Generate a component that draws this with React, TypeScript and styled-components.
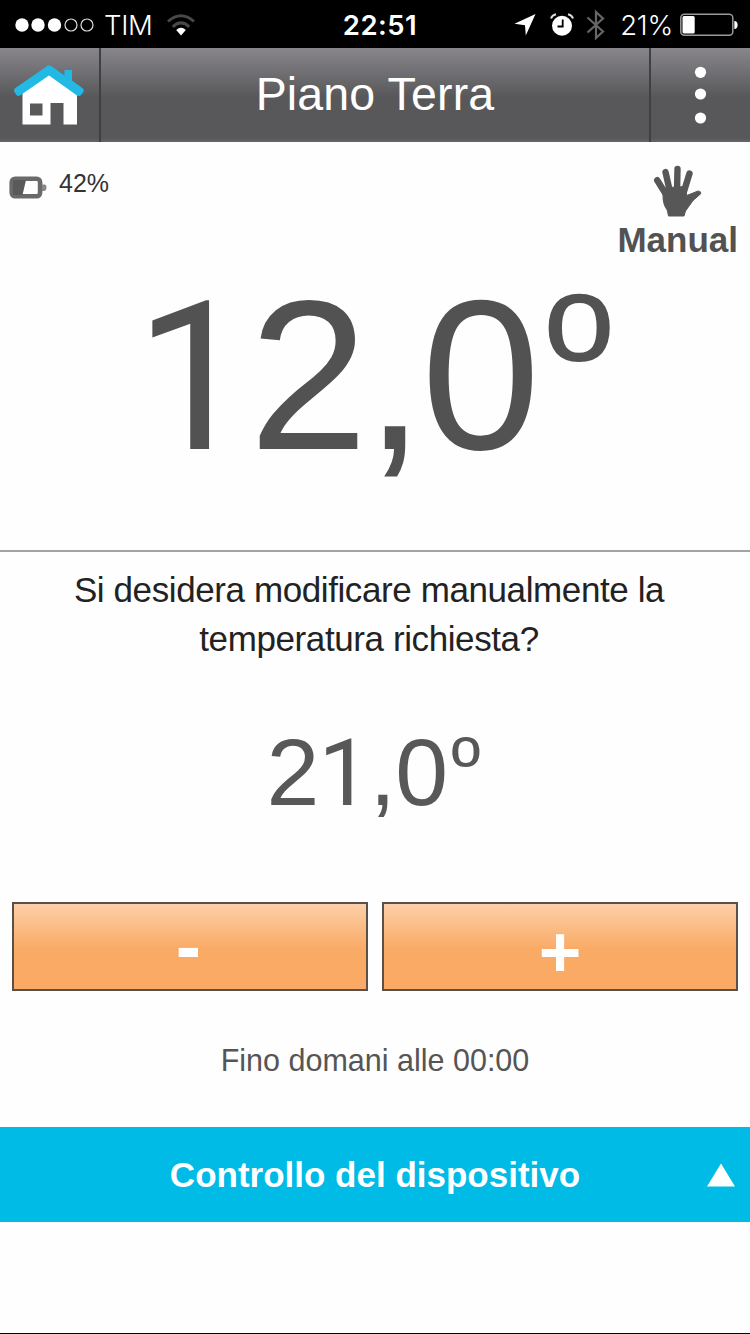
import React from "react";
import styled, { createGlobalStyle } from "styled-components";

const GlobalStyle = createGlobalStyle`
  *, *::before, *::after { box-sizing: border-box; }
  html, body { margin: 0; padding: 0; background: #fff; }
  body { font-family: "Liberation Sans", Arial, sans-serif; color: #222; }
`;

const Screen = styled.div`
  width: 750px;
  height: 1334px;
  display: flex;
  flex-direction: column;
  overflow: hidden;
  background: #fefefe;
  border-bottom: 1px solid #000;
`;

const StatusBar = styled.header`
  height: 48px;
  flex: none;
  display: grid;
  grid-template-columns: 1fr auto 1fr;
  align-items: center;
  padding: 1px 12px 0 15px;
  background: #000;
  color: #fff;
  font-family: Inter, "Liberation Sans", sans-serif;
`;

const StatusGroup = styled.div<{ $end?: boolean }>`
  display: flex;
  align-items: center;
  justify-content: ${(p) => (p.$end ? "flex-end" : "flex-start")};
`;

const Carrier = styled.span`
  margin: 0 14px 0 9px;
  font-size: 27.5px;
  line-height: 46px;
  font-weight: 300;
  letter-spacing: -0.3px;
`;

const Clock = styled.span`
  padding: 1px 0 0 7px;
  font-size: 27.5px;
  line-height: 46px;
  font-weight: 600;
  letter-spacing: 0.5px;
`;

const Charge = styled.span`
  margin: 1px 7px 0 14px;
  font-size: 27.5px;
  line-height: 46px;
  font-weight: 300;
  letter-spacing: -0.2px;
`;

const Spacer = styled.span<{ $w: number }>`
  width: ${(p) => p.$w}px;
`;

const NavBar = styled.nav`
  height: 94px;
  flex: none;
  display: grid;
  grid-template-columns: 101px 1fr 101px;
  background: linear-gradient(#88868b 0%, #58585a 52%, #58585a 96%, #666 100%);
`;

const NavButton = styled.button<{ $side: "left" | "right" }>`
  display: flex;
  align-items: flex-start;
  justify-content: flex-start;
  padding: ${(p) => (p.$side === "left" ? "17px 0 0 13px" : "18px 0 0 43px")};
  border: 0 solid #404042;
  border-${(p) => (p.$side === "left" ? "right" : "left")}-width: 2px;
  background: none;
`;

const Title = styled.h1`
  margin: 0;
  text-align: center;
  font-size: 46.5px;
  line-height: 92px;
  font-weight: 400;
  letter-spacing: 0.15px;
  color: #fff;
`;

const InfoRow = styled.section`
  height: 120px;
  flex: none;
  display: flex;
  justify-content: space-between;
  padding: 22px 12px 0 9px;
`;

const BatteryInfo = styled.div`
  display: flex;
  align-items: flex-start;
  gap: 12px;
  font-size: 25px;
  line-height: 38px;
  color: #333;

  svg { margin-top: 12px; }
`;

const Mode = styled.div`
  display: flex;
  flex-direction: column;
  align-items: center;
  font-size: 35px;
  line-height: 44px;
  font-weight: 700;
  color: #525252;
`;

const Reading = styled.output`
  display: block;
  flex: none;
  height: 288px;
  padding-right: 6px;
  text-align: center;
  font-size: 214px;
  line-height: 226px;
  letter-spacing: -3px;
  color: #525252;
`;

const One = styled.span`
  font-family: Roboto, "Liberation Sans", sans-serif;
  font-size: 0.972em;
  line-height: 0;
`;

const Degree = styled.span`
  margin-left: 0.05em;
  font-size: 0.84em;
  line-height: 0;
  vertical-align: 0.165em;
`;

const Divider = styled.hr`
  flex: none;
  width: 100%;
  height: 2px;
  margin: 0;
  border: 0;
  background: #a3a3a3;
`;

const Question = styled.p`
  flex: none;
  width: 620px;
  margin: 13px 0 0 59px;
  text-align: center;
  font-size: 35px;
  line-height: 49px;
  letter-spacing: -0.4px;
  color: #222;
`;

const Setpoint = styled.output`
  flex: none;
  height: 110px;
  margin-top: 54px;
  padding-right: 4px;
  text-align: center;
  font-size: 95px;
  line-height: 110px;
  letter-spacing: -0.8px;
  color: #585858;
`;

const Buttons = styled.div`
  flex: none;
  display: grid;
  grid-template-columns: 1fr 1fr;
  gap: 14px;
  margin-top: 75px;
  padding: 0 12px;
`;

const StepButton = styled.button<{ $minus?: boolean }>`
  height: 89px;
  padding: ${(p) => (p.$minus ? "0 3px 2px 0" : "9px 0 0")};
  border: 2px solid #5a504a;
  background: linear-gradient(#fdcfa8 0%, #f9aa64 54%, #fbaa65 100%);
  font: 700 ${(p) => (p.$minus ? 76 : 73)}px/73px "Liberation Sans", Arial, sans-serif;
  color: #fff;
`;

const Until = styled.p`
  flex: none;
  margin: 49px 0 0;
  text-align: center;
  font-size: 30.5px;
  line-height: 40px;
  color: #555;
`;

const Footer = styled.button`
  flex: none;
  height: 95px;
  margin-top: 47px;
  display: grid;
  grid-template-columns: 1fr 28px;
  align-items: center;
  padding: 0 15px 0 43px;
  border: 0;
  background: #00bbe6;
  font: 700 35px/44px "Liberation Sans", Arial, sans-serif;
  color: #fff;
`;

const SignalIcon = () => (
  <svg width="80" height="16" viewBox="0 0 80 16">
    {[7, 23, 39.5].map((x) => <circle key={x} cx={x} cy="8" r="6.7" fill="#fff" />)}
    {[56, 72].map((x) => <circle key={x} cx={x} cy="8" r="6" fill="none" stroke="#ddd" strokeWidth="1.2" />)}
  </svg>
);

const WifiIcon = () => (
  <svg width="28" height="22" viewBox="0 0 28 22" fill="none" strokeWidth="3">
    <path d="M1 7.5Q14-4 27 7.5" stroke="#484848" />
    <path d="M5.8 12.8Q14 5 22.2 12.8" stroke="#484848" />
    <path d="M9.2 16Q14 11.5 18.8 16L14 21.5Z" fill="#fff" />
  </svg>
);

const LocationIcon = () => (
  <svg width="22" height="22" viewBox="0 0 22 22">
    <path d="M21.5 0 11.8 21.5 11 11.2.5 9.8Z" fill="#fff" />
  </svg>
);

const AlarmIcon = () => (
  <svg width="24" height="24" viewBox="0 0 24 24" fill="none">
    <circle cx="12" cy="12.7" r="10" fill="#fff" />
    <path d="M1 5.5Q2 2 6 1.2M23 5.5Q22 2 18 1.2" stroke="#ddd" strokeWidth="2" />
    <path d="M12.7 6.5V13.5H7.5" stroke="#000" strokeWidth="1.8" />
  </svg>
);

const BluetoothIcon = () => (
  <svg width="20" height="32" viewBox="0 0 20 32" fill="none" stroke="#666" strokeWidth="2.2">
    <path d="M1.5 8.5 17 22.5 10 29V3L17 9.5 1.5 23.5" />
  </svg>
);

const PhoneBatteryIcon = () => (
  <svg width="58" height="24" viewBox="0 0 58 24">
    <rect x=".8" y="1.2" width="52" height="21" rx="3.5" fill="none" stroke="#999" strokeWidth="1.5" />
    <rect x="2.5" y="3" width="12.2" height="17.5" rx="1.5" fill="#fff" />
    <path d="M54.3 8Q57.6 8 57.6 12T54.3 16Z" fill="#fff" />
  </svg>
);

const HomeIcon = () => (
  <svg width="72" height="62" viewBox="0 0 72 62">
    <path d="M9.5 28 36 8 64 28V59.5H50.5V38H37.5V59.5H9.5Z" fill="#fff" />
    <path d="M17 38.5H29.5V50.5H17Z" fill="#59595b" />
    <path d="M36 .5Q37.5 .5 39 1.5L51.5 10.5V5H59V15.5L70 23.5Q71.5 25 70.5 27L68 30Q66 31.5 64 30.5L36 10.5 7 30.5Q5 31.5 3.5 30L1.2 26.5Q.5 24.5 2 23.2L33.5 1.5Q34.5 .5 36 .5Z" fill="#22b9e5" />
  </svg>
);

const MenuIcon = () => (
  <svg width="14" height="60" viewBox="0 0 14 60" fill="#fff">
    <circle cx="6.5" cy="6.3" r="5.6" />
    <circle cx="6.5" cy="28" r="5.6" />
    <circle cx="6.5" cy="52" r="5.6" />
  </svg>
);

const DeviceBatteryIcon = () => (
  <svg width="38" height="23" viewBox="0 0 38 23">
    <rect x="2.7" y="2.7" width="28.4" height="17.6" rx="3.5" fill="#fff" stroke="#6a6a6a" strokeWidth="4.6" />
    <path d="M4 4H17L13.5 19H4Z" fill="#5a5a5a" />
    <path d="M33 8.5H35.5Q37.5 8.5 37.5 11.5T35.5 15H33Z" fill="#888" />
  </svg>
);

const HandIcon = () => (
  <svg width="50" height="54" viewBox="0 0 50 54" fill="none" stroke="#575757" strokeLinecap="round" strokeLinejoin="round">
    <path d="M4.2 16.2 14 32M12.5 8 17 28M24.5 5 24 27M36.5 9.5 30.5 29" strokeWidth="6.4" />
    <path d="M10 29Q11 24.5 16 23.5L32.5 22.5 33.8 31.5 44.5 27.2Q48.5 26.8 47.5 30L40 36.5 32.5 47 31 52H15.5Q15 46 11.5 41.5 9.5 36 10 29Z" fill="#575757" strokeWidth="1" />
  </svg>
);

const UpIcon = () => (
  <svg width="28" height="24" viewBox="0 0 28 24">
    <path d="M14 .5 28 23.5H0Z" fill="#fff" />
  </svg>
);

export default function App() {
  return (
    <>
      <GlobalStyle />
      <Screen>
        <StatusBar>
          <StatusGroup>
            <SignalIcon />
            <Carrier>TIM</Carrier>
            <WifiIcon />
          </StatusGroup>
          <Clock>22:51</Clock>
          <StatusGroup $end>
            <LocationIcon />
            <Spacer $w={14} />
            <AlarmIcon />
            <Spacer $w={12} />
            <BluetoothIcon />
            <Charge>21%</Charge>
            <PhoneBatteryIcon />
          </StatusGroup>
        </StatusBar>
        <NavBar>
          <NavButton $side="left" aria-label="Home"><HomeIcon /></NavButton>
          <Title>Piano Terra</Title>
          <NavButton $side="right" aria-label="Menu"><MenuIcon /></NavButton>
        </NavBar>
        <InfoRow>
          <BatteryInfo><DeviceBatteryIcon />42%</BatteryInfo>
          <Mode><HandIcon />Manual</Mode>
        </InfoRow>
        <Reading><One>1</One>2,0<Degree>º</Degree></Reading>
        <Divider />
        <Question>Si desidera modificare manualmente la temperatura richiesta?</Question>
        <Setpoint>2<One>1</One>,0<Degree>º</Degree></Setpoint>
        <Buttons>
          <StepButton $minus>-</StepButton>
          <StepButton>+</StepButton>
        </Buttons>
        <Until>Fino domani alle 00:00</Until>
        <Footer>
          <span>Controllo del dispositivo</span>
          <UpIcon />
        </Footer>
      </Screen>
    </>
  );
}
